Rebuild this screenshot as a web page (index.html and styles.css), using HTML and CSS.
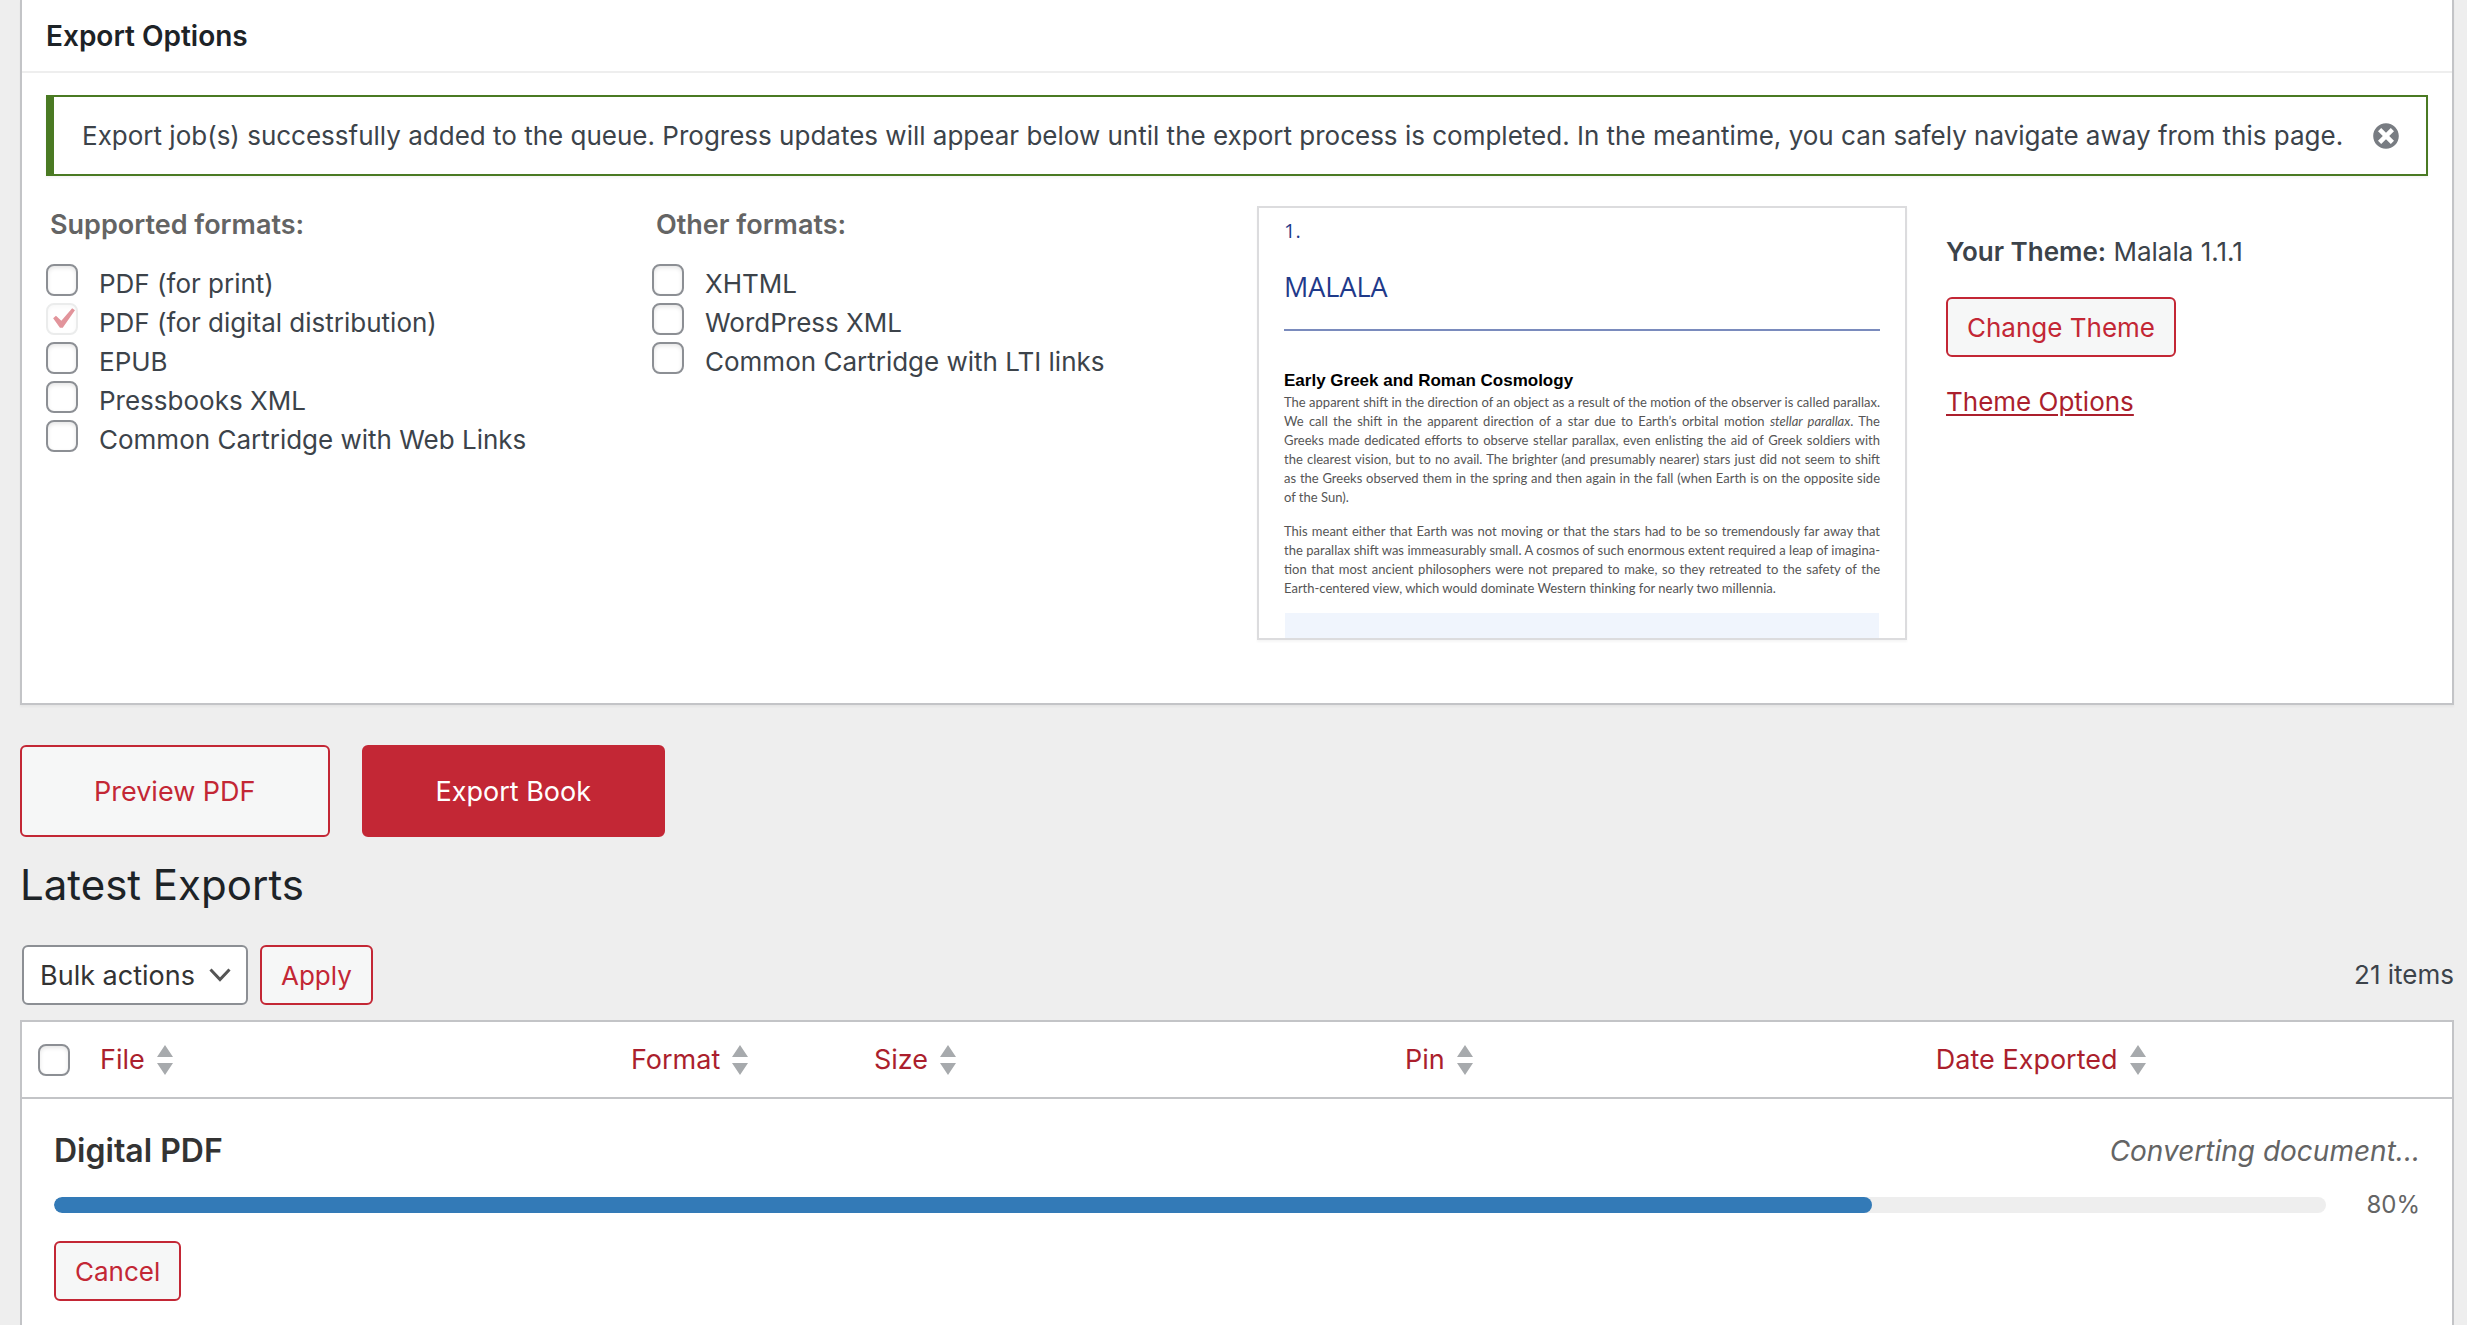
FILE: index.html
```html
<!DOCTYPE html>
<html lang="en">
<head>
<meta charset="utf-8">
<meta name="viewport" content="width=device-width, initial-scale=1">
<title>Export</title>
<link rel="stylesheet" href="styles.css">
</head>
<body>
<main class="page">
  <section class="panel">
    <h2 class="panel-title">Export Options</h2>
    <div class="panel-body">
      <div class="notice" role="status">
        <p class="notice-text">Export job(s) successfully added to the queue. Progress updates will appear below until the export process is completed. In the meantime, you can safely navigate away from this page.</p>
        <button class="notice-dismiss" type="button" aria-label="Dismiss this notice">
          <svg viewBox="0 0 20 20" width="32" height="32" aria-hidden="true"><path fill="currentColor" d="M10 2c4.42 0 8 3.58 8 8s-3.58 8-8 8-8-3.58-8-8 3.58-8 8-8zm5 11l-3-3 3-3-2-2-3 3-3-3-2 2 3 3-3 3 2 2 3-3 3 3z"/></svg>
        </button>
      </div>
      <div class="options">
        <fieldset class="formats">
          <legend class="formats-title">Supported formats:</legend>
          <label class="format"><input class="check" type="checkbox">PDF (for print)</label>
          <label class="format"><input class="check" type="checkbox" checked disabled>PDF (for digital distribution)</label>
          <label class="format"><input class="check" type="checkbox">EPUB</label>
          <label class="format"><input class="check" type="checkbox">Pressbooks XML</label>
          <label class="format"><input class="check" type="checkbox">Common Cartridge with Web Links</label>
        </fieldset>
        <fieldset class="formats">
          <legend class="formats-title">Other formats:</legend>
          <label class="format"><input class="check" type="checkbox">XHTML</label>
          <label class="format"><input class="check" type="checkbox">WordPress XML</label>
          <label class="format"><input class="check" type="checkbox">Common Cartridge with LTI links</label>
        </fieldset>
        <div class="theme">
          <article class="sample">
            <p class="sample-number">1.</p>
            <h3 class="sample-title">MALALA</h3>
            <h4 class="sample-heading">Early Greek and Roman Cosmology</h4>
            <p class="sample-text">
              <span class="line">The apparent shift in the direction of an object as a result of the motion of the observer is called parallax.</span>
              <span class="line">We call the shift in the apparent direction of a star due to Earth’s orbital motion <em>stellar parallax</em>. The</span>
              <span class="line">Greeks made dedicated efforts to observe stellar parallax, even enlisting the aid of Greek soldiers with</span>
              <span class="line">the clearest vision, but to no avail. The brighter (and presumably nearer) stars just did not seem to shift</span>
              <span class="line">as the Greeks observed them in the spring and then again in the fall (when Earth is on the opposite side</span>
              <span class="line">of the Sun).</span>
            </p>
            <p class="sample-text">
              <span class="line">This meant either that Earth was not moving or that the stars had to be so tremendously far away that</span>
              <span class="line">the parallax shift was immeasurably small. A cosmos of such enormous extent required a leap of imagina-</span>
              <span class="line">tion that most ancient philosophers were not prepared to make, so they retreated to the safety of the</span>
              <span class="line">Earth-centered view, which would dominate Western thinking for nearly two millennia.</span>
            </p>
            <div class="sample-box"></div>
          </article>
          <div class="theme-info">
            <p class="theme-name"><strong>Your Theme:</strong> Malala 1.1.1</p>
            <button class="button" type="button">Change Theme</button>
            <a class="theme-link" href="#options">Theme Options</a>
          </div>
        </div>
      </div>
    </div>
  </section>

  <div class="actions">
    <button class="button button-hero" type="button">Preview PDF</button>
    <button class="button button-hero button-primary" type="button">Export Book</button>
  </div>

  <h1 class="heading">Latest Exports</h1>

  <div class="toolbar">
    <select class="bulk" aria-label="Select bulk action">
      <option>Bulk actions</option>
      <option>Delete</option>
    </select>
    <button class="button" type="button">Apply</button>
    <span class="count">21 items</span>
  </div>

  <table class="exports">
    <colgroup>
      <col class="col-check"><col class="col-wide"><col class="col-narrow"><col class="col-wide"><col class="col-wide"><col>
    </colgroup>
    <thead>
      <tr>
        <th scope="col" class="cell-check"><input class="check" type="checkbox" aria-label="Select all"></th>
        <th scope="col"><a class="sort" href="#file">File<svg class="arrows" viewBox="0 0 16 30" aria-hidden="true"><path d="M8 0l8 12H0zM0 18h16L8 30z"/></svg></a></th>
        <th scope="col"><a class="sort" href="#format">Format<svg class="arrows" viewBox="0 0 16 30" aria-hidden="true"><path d="M8 0l8 12H0zM0 18h16L8 30z"/></svg></a></th>
        <th scope="col"><a class="sort" href="#size">Size<svg class="arrows" viewBox="0 0 16 30" aria-hidden="true"><path d="M8 0l8 12H0zM0 18h16L8 30z"/></svg></a></th>
        <th scope="col"><a class="sort" href="#pin">Pin<svg class="arrows" viewBox="0 0 16 30" aria-hidden="true"><path d="M8 0l8 12H0zM0 18h16L8 30z"/></svg></a></th>
        <th scope="col"><a class="sort" href="#date">Date Exported<svg class="arrows" viewBox="0 0 16 30" aria-hidden="true"><path d="M8 0l8 12H0zM0 18h16L8 30z"/></svg></a></th>
      </tr>
    </thead>
    <tbody>
      <tr>
        <td class="job" colspan="6">
          <div class="job-head">
            <strong class="job-name" id="job">Digital PDF</strong>
            <em class="job-status">Converting document...</em>
          </div>
          <div class="job-progress">
            <progress class="bar" value="80" max="100" aria-labelledby="job"></progress>
            <span class="percent">80%</span>
          </div>
          <button class="button" type="button">Cancel</button>
        </td>
      </tr>
    </tbody>
  </table>
</main>
</body>
</html>
```
FILE: styles.css
```css
* {
  box-sizing: border-box;
}

body {
  margin: 0;
  background: #eee;
  color: #3c434a;
  font: 26px/40px Inter, "Liberation Sans", sans-serif;
}

h1, h2, h3, h4, p {
  margin: 0;
}

button, select, input {
  margin: 0;
  font: inherit;
}

.page {
  padding: 0 13px 0 20px;
}

/* Export options */
.panel {
  background: #fff;
  border: 2px solid #c3c4c7;
  border-top: 0;
  box-shadow: 0 2px 2px rgba(0, 0, 0, .04);
}

.panel-title {
  padding: 1px 24px 0;
  border-bottom: 2px solid #eee;
  color: #1d2327;
  font-size: 28px;
  font-weight: 600;
  line-height: 70px;
}

.panel-body {
  padding: 22px 24px 63px;
}

.notice {
  display: flex;
  align-items: center;
  justify-content: space-between;
  padding: 19px 24px 19px 28px;
  border: 2px solid #4a7a23;
  border-left-width: 8px;
  box-shadow: 0 2px 2px rgba(0, 0, 0, .04);
}

.notice-text {
  line-height: 39px;
}

.notice-dismiss {
  display: flex;
  padding: 0;
  border: 0;
  background: none;
  color: #787c82;
}

.options {
  display: grid;
  grid-template-columns: 606fr 605fr 1171fr;
  margin-top: 30px;
}

.formats {
  min-width: 0;
  margin: 0;
  padding: 0;
  border: 0;
}

.formats-title {
  padding: 0 4px;
  margin-bottom: 20px;
  color: #646464;
  font-size: 27px;
  font-weight: 600;
  line-height: 38px;
}

.format {
  display: flex;
  gap: 21px;
  line-height: 39px;
}

.check {
  appearance: none;
  flex: none;
  width: 32px;
  height: 32px;
  border: 2px solid #8c8f94;
  border-radius: 8px;
  background: #fff center / 42px no-repeat;
  box-shadow: inset 0 2px 4px rgba(0, 0, 0, .1);
}

.check:checked {
  background-image: url("data:image/svg+xml,%3Csvg xmlns='http://www.w3.org/2000/svg' viewBox='0 0 20 20'%3E%3Cpath fill='%23e2949b' d='M14.83 4.89l1.34.94-5.81 8.38H9.02L5.78 9.67l1.34-1.25 2.57 2.4z'/%3E%3C/svg%3E");
}

.check:disabled {
  border-color: #ebecec;
  box-shadow: inset 0 2px 4px rgba(0, 0, 0, .03);
}

.theme {
  display: flex;
  gap: 39px;
}

.sample {
  flex: none;
  width: 650px;
  height: 434px;
  overflow: hidden;
  padding: 9px 25px 0;
  border: 2px solid #dcdcde;
  box-shadow: 0 2px 2px rgba(0, 0, 0, .04);
  color: #555;
  font: 13px/19px Lato, "Noto Sans", sans-serif;
}

.sample-number {
  color: #1f3a8a;
  font: 20px/28px "Open Sans", "Noto Sans", sans-serif;
}

.sample-title {
  padding: 26px 0 26px;
  border-bottom: 2px solid #7a8bbd;
  color: #1f3a8a;
  font: 27px/32px "Open Sans", "Noto Sans", sans-serif;
}

.sample-heading {
  margin-top: 38px;
  color: #000;
  font: bold 17px/24px "Liberation Sans", sans-serif;
}

.sample-text {
  margin-bottom: 15px;
}

.line {
  display: block;
  text-align-last: justify;
  white-space: nowrap;
}

.line:last-child {
  text-align-last: left;
}

.sample-box {
  height: 80px;
  margin: 0 1px;
  background: #f0f5fd;
}

.theme-info {
  display: flex;
  flex-direction: column;
  align-items: flex-start;
  gap: 25px;
  padding-top: 26px;
}

.theme-name strong {
  font-weight: 600;
}

.theme-link {
  color: #ab1f2d;
  text-decoration-thickness: 2px;
  text-underline-offset: 3px;
}

/* Buttons */
.button {
  height: 60px;
  padding: 2px 19px 0;
  border: 2px solid #c32735;
  border-radius: 6px;
  background: #f6f7f7;
  color: #c32735;
  white-space: nowrap;
}

.button-hero {
  height: 92px;
  padding: 2px 72px 0;
  font-size: 27px;
}

.button-primary {
  background: #c32735;
  color: #fff;
}

.actions {
  display: flex;
  gap: 32px;
  margin-top: 40px;
}

/* Latest exports */
.heading {
  margin: 24px 0 36px;
  color: #1d2327;
  font-size: 42px;
  font-weight: 400;
  line-height: 48px;
}

.toolbar {
  display: flex;
  align-items: center;
  gap: 12px;
  margin-bottom: 15px;
  padding-left: 2px;
}

.bulk {
  appearance: none;
  width: 226px;
  height: 60px;
  padding: 2px 16px 0;
  border: 2px solid #8c8f94;
  border-radius: 6px;
  background: #fff url("data:image/svg+xml,%3Csvg xmlns='http://www.w3.org/2000/svg' viewBox='0 0 22 14'%3E%3Cpath fill='none' stroke='%23555' stroke-width='3' d='M1.500 1.500L11 11.500L20.500 1.500'/%3E%3C/svg%3E") right 15px center / 22px 14px no-repeat;
  color: #333;
  font-size: 27px;
}

.count {
  margin-left: auto;
}

.exports {
  width: 100%;
  table-layout: fixed;
  border: 2px solid #c3c4c7;
  border-bottom: 0;
  border-spacing: 0;
  background: #fff;
}

.col-check {
  width: 78px;
}

.col-wide {
  width: 21.85%;
}

.col-narrow {
  width: 10%;
}

.exports th {
  height: 77px;
  padding: 0;
  border-bottom: 2px solid #c3c4c7;
  font-size: 27px;
  font-weight: 400;
  text-align: left;
}

.exports .cell-check {
  padding-left: 16px;
}

.cell-check .check {
  display: block;
}

.sort {
  display: flex;
  align-items: center;
  gap: 12px;
  color: #ab1f2d;
  text-decoration: none;
}

.arrows {
  width: 16px;
  height: 30px;
  fill: #a7aaad;
}

.job {
  padding: 28px 32px 24px;
}

.job-head {
  display: flex;
  justify-content: space-between;
  line-height: 48px;
}

.job-name {
  color: #333;
  font-size: 32px;
  font-weight: 600;
}

.job-status {
  color: #646464;
  font-size: 28px;
}

.job-progress {
  display: flex;
  align-items: center;
  margin: 14px 0 20px;
  line-height: 32px;
}

.bar {
  appearance: none;
  flex: 1;
  height: 16px;
  border: 0;
  border-radius: 8px;
  overflow: hidden;
  background: #eee;
}

.bar::-webkit-progress-bar {
  background: #eee;
}

.bar::-webkit-progress-value {
  border-radius: 8px;
  background: #337ab7;
}

.percent {
  width: 94px;
  color: #646464;
  font-size: 24px;
  text-align: right;
}
```
